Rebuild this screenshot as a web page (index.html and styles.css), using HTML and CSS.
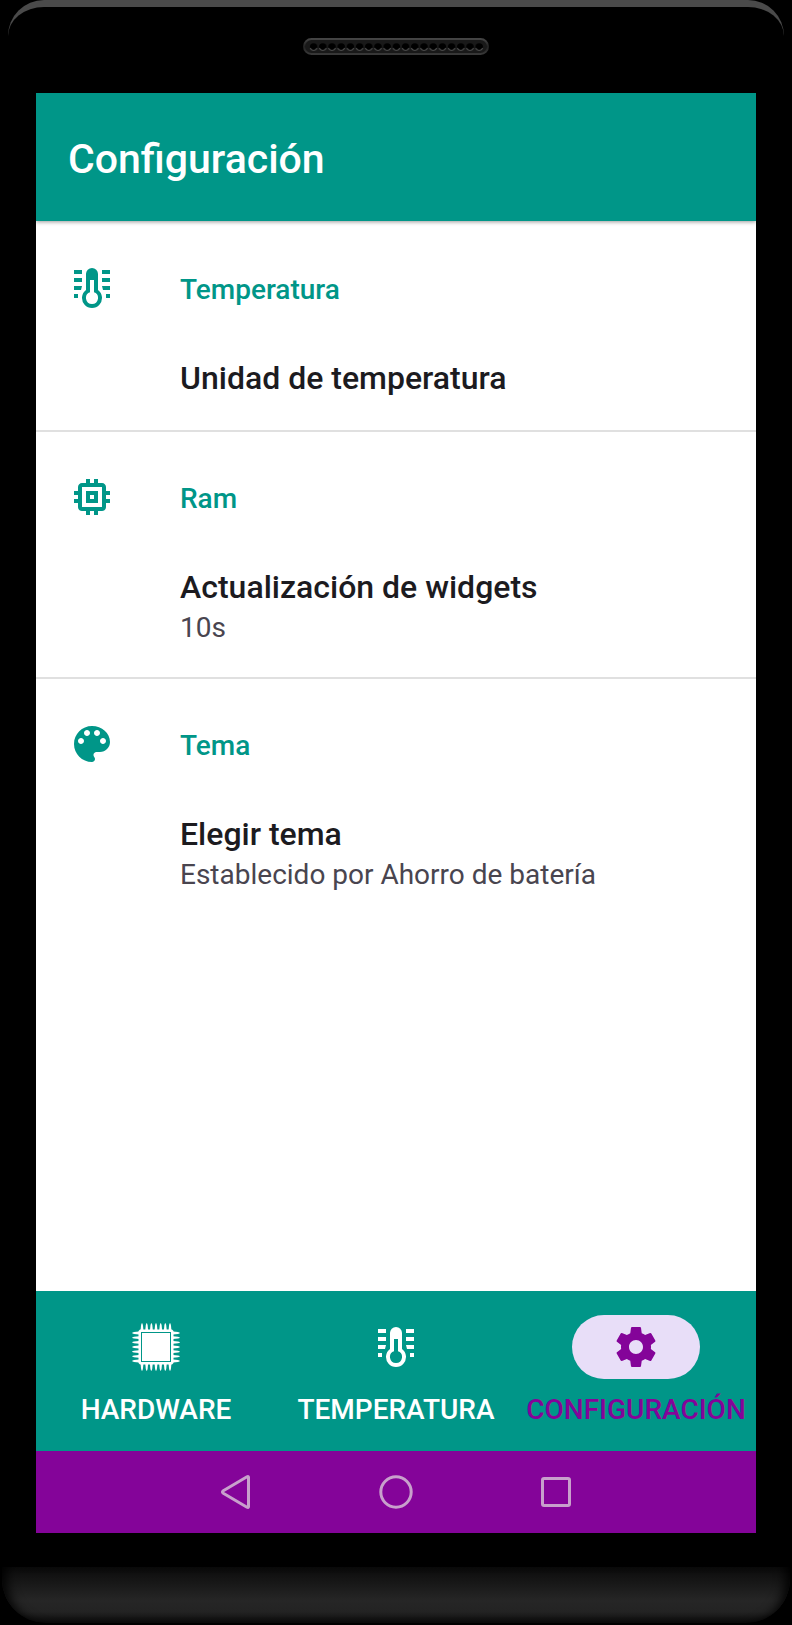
FILE: index.html
```
<!DOCTYPE html>
<html lang="es">
<head>
  <meta charset="UTF-8">
  <meta name="viewport" content="width=device-width, initial-scale=1.0">
  <title>Configuración</title>
  <link rel="stylesheet" href="styles.css">
</head>
<body>
  <svg class="symbols" aria-hidden="true">
    <symbol id="thermometer" viewBox="0 0 24 24">
      <path d="M3 3h4v2H3zM3 7h4v2H3zM3 11h4l-.5 2H3zM3 15h2v2H3zM17 3h4v2h-4zM17 7h4v2h-4zM17 11h4v2h-3.500zM19 15h2v2h-2z"/>
      <path fill-rule="evenodd" d="M15 13V5a3 3 0 0 0-6 0v8a5 5 0 1 0 6 0zm-3 7a3 3 0 0 1-1-5.830V8h2v6.170A3 3 0 0 1 12 20z"/>
    </symbol>
  </svg>

  <div class="phone">
    <div class="phone-top">
      <svg class="speaker" viewBox="0 0 186 18" aria-hidden="true">
        <defs>
          <linearGradient id="rim" x1="0" y1="0" x2="0" y2="1">
            <stop offset="0" stop-color="#444"/>
            <stop offset="0.5" stop-color="#222"/>
            <stop offset="1" stop-color="#383838"/>
          </linearGradient>
          <pattern id="holes" x="6" y="0" width="9.200" height="18" patternUnits="userSpaceOnUse">
            <circle cx="4.600" cy="9" r="3.800" fill="#000"/>
            <path d="M1.200 10a3.600 3.600 0 0 0 6.800 0" fill="none" stroke="#4a4a4a"/>
          </pattern>
        </defs>
        <rect x="1" y="1" width="184" height="15" rx="7.500" fill="#191919" stroke="url(#rim)" stroke-width="2"/>
        <rect x="6" y="2" width="174.800" height="13" fill="url(#holes)"/>
      </svg>
    </div>

    <div class="screen">
      <header class="app-bar">
        <h1>Configuración</h1>
      </header>

      <main class="settings">
        <section class="group">
          <h2 class="category">
            <svg class="icon"><use href="#thermometer"/></svg>
            Temperatura
          </h2>
          <button type="button" class="preference">
            <span class="pref-title">Unidad de temperatura</span>
          </button>
        </section>

        <section class="group">
          <h2 class="category">
            <svg class="icon" viewBox="0 0 24 24"><path d="M15 9H9v6h6V9zm-2 4h-2v-2h2v2zm8-2V9h-2V7c0-1.100-.9-2-2-2h-2V3h-2v2h-2V3H9v2H7c-1.100 0-2 .9-2 2v2H3v2h2v2H3v2h2v2c0 1.100.9 2 2 2h2v2h2v-2h2v2h2v-2h2c1.100 0 2-.9 2-2v-2h2v-2h-2v-2h2zm-4 6H7V7h10v10z"/></svg>
            Ram
          </h2>
          <button type="button" class="preference">
            <span class="pref-title">Actualización de widgets</span>
            <span class="pref-summary">10s</span>
          </button>
        </section>

        <section class="group">
          <h2 class="category">
            <svg class="icon" viewBox="0 0 24 24"><path d="M12 3c-4.970 0-9 4.030-9 9s4.030 9 9 9c.83 0 1.500-.67 1.500-1.500 0-.39-.15-.74-.39-1.010-.23-.26-.38-.61-.38-.99 0-.83.67-1.500 1.500-1.500H16c2.760 0 5-2.240 5-5 0-4.420-4.030-8-9-8zm-5.500 9c-.83 0-1.500-.67-1.500-1.500S5.670 9 6.500 9 8 9.670 8 10.500 7.330 12 6.500 12zm3-4C8.670 8 8 7.330 8 6.500S8.670 5 9.500 5s1.500.67 1.500 1.500S10.330 8 9.500 8zm5 0c-.83 0-1.500-.67-1.500-1.500S13.670 5 14.500 5s1.500.67 1.500 1.500S15.330 8 14.500 8zm3 4c-.83 0-1.500-.67-1.500-1.500S16.670 9 17.500 9s1.500.67 1.500 1.500-.67 1.500-1.500 1.500z"/></svg>
            Tema
          </h2>
          <button type="button" class="preference">
            <span class="pref-title">Elegir tema</span>
            <span class="pref-summary">Establecido por Ahorro de batería</span>
          </button>
        </section>
      </main>

      <nav class="tabs">
        <a href="#hardware" class="tab">
          <span class="pill">
            <svg class="icon" viewBox="0 0 48 48">
              <path fill-rule="evenodd" d="M8 6.500h32l1.500 1.500v32L40 41.500H8L6.500 40V8zM9 9v30h30V9z"/>
              <path d="M10 10h28v28H10z"/>
              <g id="pins">
                <path id="pin" d="M8.600 7l.5-5 .6-1.800h.6l.6 1.800.5 5z"/>
                <use href="#pin" x="4.700"/>
                <use href="#pin" x="9.400"/>
                <use href="#pin" x="14"/>
                <use href="#pin" x="18.700"/>
                <use href="#pin" x="23.300"/>
                <use href="#pin" x="28"/>
              </g>
              <use href="#pins" transform="rotate(90 24 24)"/>
              <use href="#pins" transform="rotate(180 24 24)"/>
              <use href="#pins" transform="rotate(270 24 24)"/>
            </svg>
          </span>
          HARDWARE
        </a>
        <a href="#temperatura" class="tab">
          <span class="pill"><svg class="icon"><use href="#thermometer"/></svg></span>
          TEMPERATURA
        </a>
        <a href="#configuracion" class="tab active" aria-current="page">
          <span class="pill">
            <svg class="icon" viewBox="0 0 24 24"><path d="M19.430 12.980c.04-.32.07-.64.07-.98s-.03-.66-.07-.98l2.110-1.650c.19-.15.24-.42.12-.64l-2-3.460c-.12-.22-.39-.3-.61-.22l-2.490 1c-.52-.4-1.080-.73-1.690-.98l-.38-2.650C14.460 2.180 14.250 2 14 2h-4c-.25 0-.46.18-.49.42l-.38 2.650c-.61.25-1.170.59-1.690.98l-2.490-1c-.23-.09-.49 0-.61.22l-2 3.460c-.13.22-.07.49.12.64l2.110 1.650c-.04.32-.07.65-.07.98s.03.66.07.98l-2.110 1.650c-.19.15-.24.42-.12.64l2 3.460c.12.22.39.3.61.22l2.490-1c.52.4 1.080.73 1.690.98l.38 2.650c.03.24.24.42.49.42h4c.25 0 .46-.18.49-.42l.38-2.650c.61-.25 1.170-.59 1.690-.98l2.490 1c.23.09.49 0 .61-.22l2-3.460c.12-.22.07-.49-.12-.64l-2.110-1.650zM12 15.500c-1.930 0-3.500-1.570-3.500-3.500s1.570-3.500 3.500-3.500 3.500 1.570 3.500 3.500-1.570 3.500-3.500 3.500z"/></svg>
          </span>
          CONFIGURACIÓN
        </a>
      </nav>

      <div class="system-bar">
        <button type="button" aria-label="Atrás">
          <svg viewBox="0 0 40 40"><path d="M32.500 5.500v29q0 1.500-1.500.7L7.300 21.200q-1.800-1.200 0-2.400L31 4.800q1.500-.8 1.500.7z"/></svg>
        </button>
        <button type="button" aria-label="Inicio">
          <svg viewBox="0 0 40 40"><circle cx="20" cy="20" r="15.200"/></svg>
        </button>
        <button type="button" aria-label="Recientes">
          <svg viewBox="0 0 40 40"><rect x="6.500" y="6.500" width="27" height="27" rx="1.500"/></svg>
        </button>
      </div>
    </div>

    <div class="phone-bottom"></div>
  </div>
</body>
</html>
```
FILE: styles.css
```
* {
  box-sizing: border-box;
}
body {
  margin: 0;
  background: #000;
  font-family: Roboto, sans-serif;
}
.symbols {
  display: none;
}
button {
  border: none;
  background: none;
  font: inherit;
  cursor: pointer;
}

/* device frame */
.phone {
  display: flex;
  flex-direction: column;
  min-height: 100vh;
}
.phone-top {
  height: 93px;
  margin: 0 8px;
  padding-top: 31px;
  border-top: 7px solid #4a4a4a;
  border-radius: 36px 36px 0 0;
  text-align: center;
}
.speaker {
  width: 186px;
  height: 18px;
}
.phone-bottom {
  height: 56px;
  margin: 34px 2px 2px;
  border-radius: 0 0 44px 44px;
  background: linear-gradient(#0b0b0b, #262626 60%, #232323 80%, #0b0b0b);
  box-shadow: inset 12px 0 12px -8px #000, inset -12px 0 12px -8px #000;
}
.screen {
  flex: 1;
  display: flex;
  flex-direction: column;
  margin: 0 36px;
  background: #fff;
}

.app-bar {
  display: flex;
  align-items: center;
  height: 128px;
  padding: 4px 32px 0;
  background: #009688;
  color: #fff;
  box-shadow: 0 1px 4px rgba(0, 0, 0, 0.4);
}
.app-bar h1 {
  margin: 0;
  font-size: 41px;
  font-weight: 500;
}
.icon {
  width: 48px;
  height: 48px;
  fill: currentColor;
}

/* preferences */
.settings {
  flex: 1;
  padding-top: 2px;
}
.group {
  padding-top: 32px;
}
.group + .group {
  border-top: 2px solid #e0e0e0;
}
.category {
  display: flex;
  align-items: center;
  gap: 64px;
  height: 68px;
  margin: 0;
  padding: 0 32px;
  color: #009688;
  font-size: 28px;
  font-weight: 500;
}
.category .icon {
  margin-bottom: 2px;
}
.preference {
  display: block;
  width: 100%;
  padding: 33px 32px 30px 144px;
  text-align: left;
}
.pref-title,
.pref-summary {
  display: block;
}
.pref-title {
  color: #1c1b1f;
  font-size: 32px;
  font-weight: 500;
  line-height: 44px;
}
.pref-summary {
  color: #49454f;
  font-size: 28px;
  line-height: 38px;
}

/* bottom navigation */
.tabs {
  display: grid;
  grid-template-columns: repeat(3, 1fr);
  height: 160px;
  background: #009688;
}
.tab {
  display: flex;
  flex-direction: column;
  align-items: center;
  gap: 15px;
  padding-top: 24px;
  color: #fff;
  font-size: 28px;
  font-weight: 500;
  line-height: 32px;
  text-decoration: none;
}
.pill {
  display: flex;
  align-items: center;
  justify-content: center;
  width: 128px;
  height: 64px;
  border-radius: 32px;
}
.tab.active {
  color: #840499;
}
.active .pill {
  background: #e8def8;
}
.system-bar {
  display: flex;
  justify-content: center;
  align-items: center;
  gap: 80px;
  height: 82px;
  background: #840499;
}
.system-bar button {
  width: 80px;
  height: 80px;
  padding: 20px;
}
.system-bar svg {
  display: block;
  fill: none;
  stroke: #c8a0cc;
  stroke-width: 3;
}
```
